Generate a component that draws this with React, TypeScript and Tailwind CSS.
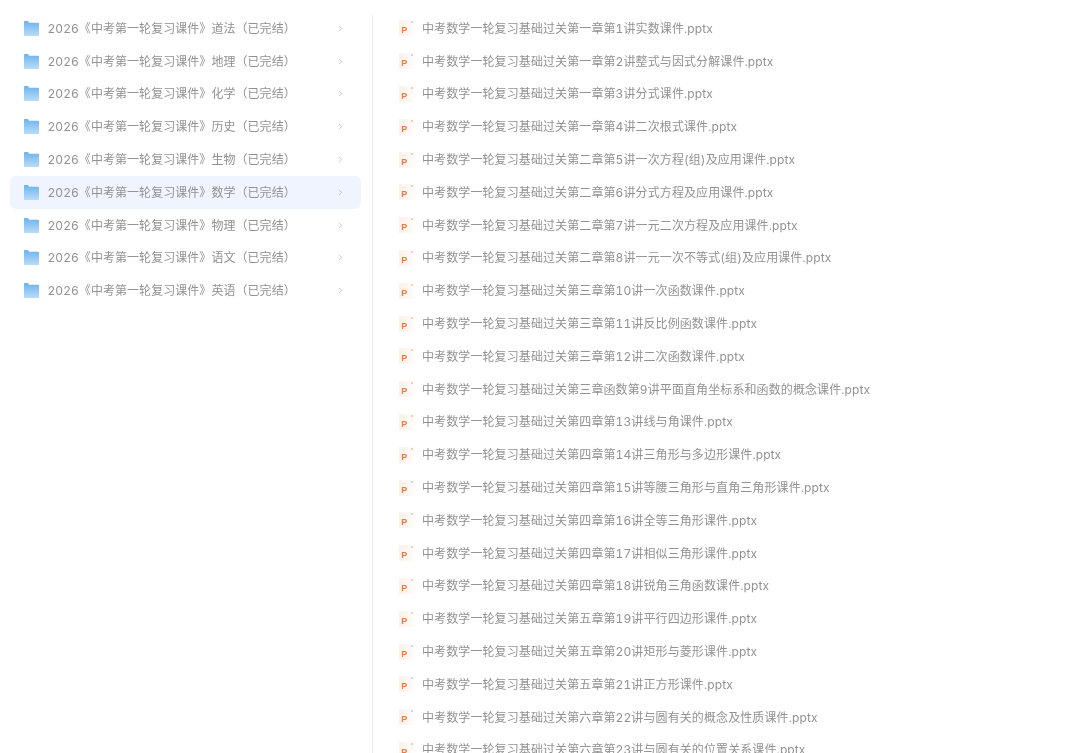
import { ChevronRight } from "lucide-react";

const subjects = ["道法", "地理", "化学", "历史", "生物", "数学", "物理", "语文", "英语"];

const files = [
  "第一章第1讲实数课件",
  "第一章第2讲整式与因式分解课件",
  "第一章第3讲分式课件",
  "第一章第4讲二次根式课件",
  "第二章第5讲一次方程(组)及应用课件",
  "第二章第6讲分式方程及应用课件",
  "第二章第7讲一元二次方程及应用课件",
  "第二章第8讲一元一次不等式(组)及应用课件",
  "第三章第10讲一次函数课件",
  "第三章第11讲反比例函数课件",
  "第三章第12讲二次函数课件",
  "第三章函数第9讲平面直角坐标系和函数的概念课件",
  "第四章第13讲线与角课件",
  "第四章第14讲三角形与多边形课件",
  "第四章第15讲等腰三角形与直角三角形课件",
  "第四章第16讲全等三角形课件",
  "第四章第17讲相似三角形课件",
  "第四章第18讲锐角三角函数课件",
  "第五章第19讲平行四边形课件",
  "第五章第20讲矩形与菱形课件",
  "第五章第21讲正方形课件",
  "第六章第22讲与圆有关的概念及性质课件",
  "第六章第23讲与圆有关的位置关系课件",
];

function FolderIcon() {
  return (
    <svg width="15" height="15" viewBox="0 0 15 15" className="shrink-0">
      <defs>
        <linearGradient id="folderFill" x1="0" y1="0" x2="0" y2="1">
          <stop offset="0" stopColor="#6db2ec" />
          <stop offset="1" stopColor="#b8dcf9" />
        </linearGradient>
      </defs>
      <path d="M0 1C0 .4.4 0 1 0h2.500c.4 0 .7.2.9.5L5 1.700h9c.6 0 1 .4 1 1V14c0 .6-.4 1-1 1H1c-.6 0-1-.4-1-1Z" fill="url(#folderFill)" />
    </svg>
  );
}

function PptIcon() {
  return (
    <svg width="15" height="16" viewBox="0 0 15 16" className="shrink-0">
      <defs>
        <linearGradient id="pptFill" x1="0" y1="0" x2="1" y2="0">
          <stop offset="0" stopColor="#fdf0e9" />
          <stop offset="1" stopColor="#fffcfa" />
        </linearGradient>
      </defs>
      <path d="M0 0h11l4 4v12H0Z" fill="url(#pptFill)" />
      <circle cx="13" cy="2" r="1" fill="#f6b8a0" />
      <text x="2.200" y="13" fontSize="9" fontWeight="800" fill="#f07a40" fontFamily="'Liberation Sans', sans-serif">P</text>
    </svg>
  );
}

export default function App() {
  return (
    <div className="flex h-screen overflow-hidden bg-white text-[#929292] font-['Inter','Noto_Sans_CJK_SC',sans-serif] text-[12px] tabular-nums blur-[0.5px]">
      {/* folders */}
      <div className="w-[372px] shrink-0 pl-[10px] pr-[11px] pt-[12px]">
        {subjects.map((s) => (
          <div
            key={s}
            className={`flex h-[32.8px] items-center rounded-md pl-[14px] pr-[16px] ${s === "数学" ? "bg-[#f0f4fe]" : ""}`}
          >
            <FolderIcon />
            <span className="ml-[8.5px] flex-1 whitespace-nowrap pt-px tracking-[0.05px]">2026《中考第一轮复习课件》{s}（已完结）</span>
            <ChevronRight size={9} strokeWidth={1.500} className="text-[#9a9a9a]" />
          </div>
        ))}
      </div>

      {/* files */}
      <div className="mt-[15px] flex-1 border-l border-[#ececec] pl-[26px]">
        <div className="-mt-[3px]">
          {files.map((f) => (
            <div key={f} className="flex h-[32.8px] items-center">
              <PptIcon />
              <span className="ml-2 whitespace-nowrap pt-px tracking-[0.1px]">中考数学一轮复习基础过关{f}.pptx</span>
            </div>
          ))}
        </div>
      </div>
    </div>
  );
}
